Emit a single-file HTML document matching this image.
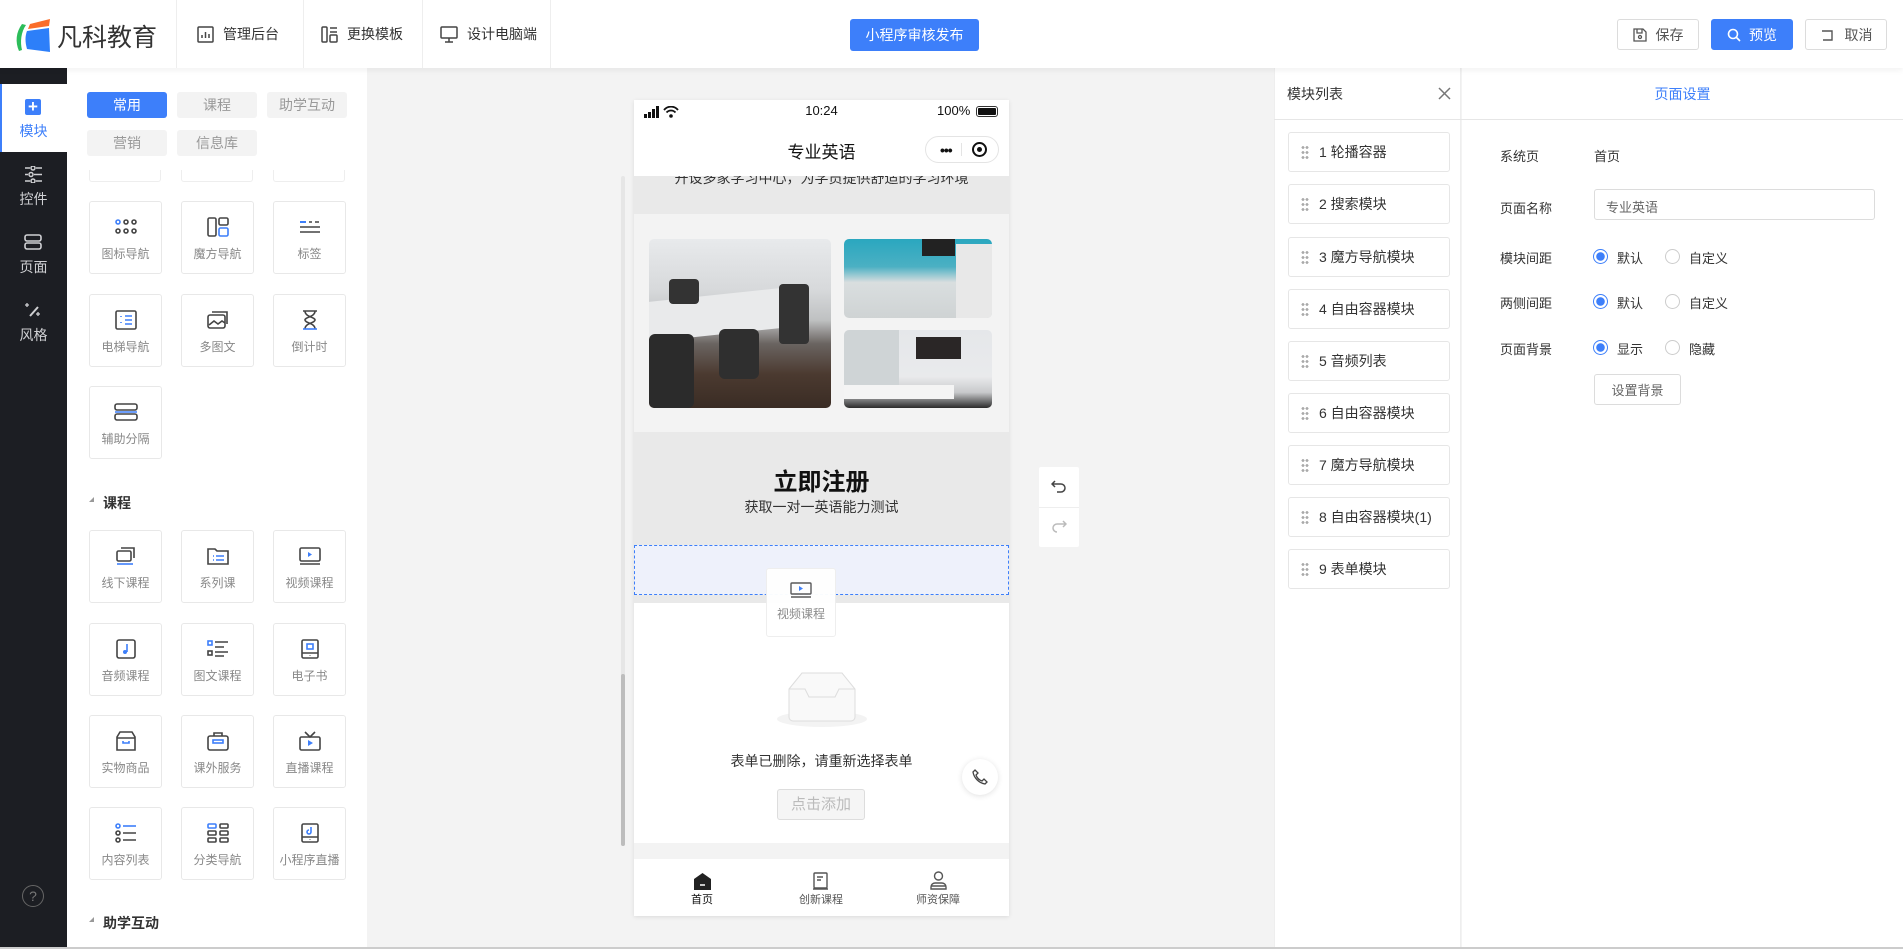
<!DOCTYPE html>
<html><head><meta charset="utf-8">
<style>
*{margin:0;padding:0;box-sizing:border-box}
body{width:1903px;height:949px;overflow:hidden;background:#f3f3f3;font-family:"Liberation Sans","Noto Sans CJK SC",sans-serif;color:#333;position:relative;font-size:14px}
.a{position:absolute}
.hdr{left:0;top:0;width:1903px;height:68px;background:#fff;box-shadow:0 2px 6px rgba(0,0,0,.06);z-index:5}
.sep{top:0;width:1px;height:68px;background:#eee}
.nav{top:0;height:68px;display:flex;align-items:center;font-size:14px;color:#333}
.nav svg{margin-right:9px}
.btn{border:1px solid #dcdcdc;border-radius:3px;background:#fff;display:flex;align-items:center;justify-content:center;font-size:14px;color:#555}
.side{left:0;top:68px;width:67px;height:881px;background:#1c1e23}
.si{left:0;width:67px;text-align:center;color:#cfd0d3;font-size:14px}
.tab{height:26px;border-radius:3px;background:#f3f3f3;color:#999;font-size:14px;display:flex;align-items:center;justify-content:center;width:80px}
.card{width:73px;height:73px;border:1px solid #e8e8e8;border-radius:3px;background:#fff;text-align:center;font-size:12px;color:#888}
.card svg{display:block;margin:15px auto 8px}
.sec{font-size:14px;color:#333;font-weight:bold}
.mi{left:1288px;width:162px;height:40px;border:1px solid #e6e6e6;border-radius:3px;background:#fff;font-size:14px;color:#333;display:flex;align-items:center;padding-left:12px}
.dots{width:8px;height:14px;margin-right:10px;background:radial-gradient(circle,#aaa 1.3px,transparent 1.5px) 0 0/4px 5px}
.lb{left:1500px;font-size:13px;color:#333}
.rd{width:15px;height:15px;border-radius:50%;border:1px solid #ccc;background:#fff}
.rd.on{border-color:#3d7ffa;background:radial-gradient(circle,#3d7ffa 4px,#fff 4.5px)}
.rt{font-size:13px;color:#333}
</style></head><body>

<div class="a hdr">
  <svg class="a" style="left:14px;top:18px" width="40" height="36" viewBox="0 0 40 36">
    <path d="M8 6 C2 14 1 24 5 33 L8 32 C6 24 7 14 12 7Z" fill="#2cbd5a"/>
    <path d="M16 6 L36 1 L35 8 L14 11Z" fill="#fa6d2a"/>
    <path d="M13 13 L35 10 L36 34 L13 31 C11 24 11 18 13 13Z" fill="#2d7ff9"/>
  </svg>
  <div class="a" style="left:57px;top:18px;font-size:25px;color:#333;letter-spacing:0px">凡科教育</div>
  <div class="a sep" style="left:176px"></div>
  <div class="a sep" style="left:303px"></div>
  <div class="a sep" style="left:422px"></div>
  <div class="a sep" style="left:550px"></div>
  <div class="a nav" style="left:197px"><svg width="17" height="17" viewBox="0 0 17 17" fill="none" stroke="#444" stroke-width="1.5"><rect x="1" y="1" width="15" height="15" rx="1"/><path d="M5 12V9M8.5 12V6M12 12V8"/></svg>管理后台</div>
  <div class="a nav" style="left:321px"><svg width="17" height="17" viewBox="0 0 17 17" fill="none" stroke="#444" stroke-width="1.5"><rect x="1" y="1" width="5" height="15" rx="1"/><path d="M9 2h7M9 6h7"/><rect x="9" y="9" width="7" height="7" rx="1"/></svg>更换模板</div>
  <div class="a nav" style="left:440px"><svg width="18" height="17" viewBox="0 0 18 17" fill="none" stroke="#444" stroke-width="1.5"><rect x="1" y="1" width="16" height="11" rx="1"/><path d="M9 12v4M5 16h8"/></svg>设计电脑端</div>
  <div class="a" style="left:850px;top:19px;width:129px;height:32px;background:#3d7ffa;border-radius:3px;color:#fff;font-size:14px;display:flex;align-items:center;justify-content:center">小程序审核发布</div>
  <div class="a btn" style="left:1617px;top:19px;width:82px;height:31px"><svg width="14" height="14" viewBox="0 0 14 14" fill="none" stroke="#555" stroke-width="1.3" style="margin-right:9px"><path d="M1 1h9l3 3v9H1z"/><path d="M4 1v4h5V1"/><circle cx="7" cy="9" r="1.5"/></svg>保存</div>
  <div class="a btn" style="left:1711px;top:19px;width:82px;height:31px;background:#3d7ffa;border-color:#3d7ffa;color:#fff"><svg width="14" height="14" viewBox="0 0 14 14" fill="none" stroke="#fff" stroke-width="1.6" style="margin-right:8px"><circle cx="6" cy="6" r="4.5"/><path d="M9.5 9.5L13 13"/></svg>预览</div>
  <div class="a btn" style="left:1805px;top:19px;width:82px;height:31px"><svg width="14" height="14" viewBox="0 0 14 14" fill="none" stroke="#555" stroke-width="1.4" style="margin-right:11px"><path d="M2 3h10v9H3"/></svg>取消</div>
</div>

<div class="a side"></div>
<div class="a" style="left:0;top:68px;width:67px;height:16px;background:#1c1e23;border-radius:0 0 6px 0"></div>
<div class="a" style="left:0;top:84px;width:67px;height:68px;background:#fff"></div>
<div class="a" style="left:0;top:84px;width:2px;height:68px;background:#3d7ffa"></div>
<div class="a" style="left:25px;top:99px;width:16px;height:16px;background:#3d7ffa;border-radius:2px;color:#fff;font-size:17px;line-height:15px;text-align:center;font-weight:bold">+</div>
<div class="a si" style="top:121px;color:#3d7ffa">模块</div>
<svg class="a" style="left:24px;top:166px" width="19" height="17" viewBox="0 0 19 17" fill="none" stroke="#cfd0d3" stroke-width="1.5"><path d="M1 2h5M12 2h6M1 8.5h3M10 8.5h8M1 15h5M12 15h6"/><circle cx="9" cy="2" r="2"/><circle cx="7" cy="8.5" r="2"/><circle cx="9" cy="15" r="2"/></svg>
<div class="a si" style="top:189px">控件</div>
<svg class="a" style="left:24px;top:234px" width="18" height="16" viewBox="0 0 18 16" fill="none" stroke="#cfd0d3" stroke-width="1.6"><rect x="1" y="1" width="16" height="6" rx="2"/><rect x="1" y="9" width="16" height="6" rx="2"/></svg>
<div class="a si" style="top:257px">页面</div>
<svg class="a" style="left:24px;top:301px" width="18" height="17" viewBox="0 0 18 17" fill="none" stroke="#cfd0d3" stroke-width="2"><path d="M6 15L14 6"/><path d="M3 2v4M1 4h4M14 11v4M12 13h4" stroke-width="1.3"/></svg>
<div class="a si" style="top:325px">风格</div>
<div class="a" style="left:22px;top:885px;width:22px;height:22px;border:1px solid #666;border-radius:50%;color:#777;font-size:14px;text-align:center;line-height:20px">?</div>

<div class="a" style="left:67px;top:68px;width:300px;height:881px;background:#fff"></div>
<div class="a tab" style="left:87px;top:92px;background:#3d7ffa;color:#fff">常用</div>
<div class="a tab" style="left:177px;top:92px">课程</div>
<div class="a tab" style="left:267px;top:92px">助学互动</div>
<div class="a tab" style="left:87px;top:130px">营销</div>
<div class="a tab" style="left:177px;top:130px">信息库</div>
<div class="a" style="left:89px;top:170px;width:72px;height:12px;border:1px solid #eee;border-top:none;border-radius:0 0 3px 3px"></div>
<div class="a" style="left:181px;top:170px;width:72px;height:12px;border:1px solid #eee;border-top:none;border-radius:0 0 3px 3px"></div>
<div class="a" style="left:273px;top:170px;width:72px;height:12px;border:1px solid #eee;border-top:none;border-radius:0 0 3px 3px"></div>

<div class="a card" style="left:89px;top:201px"><svg width="24" height="20" viewBox="0 0 24 20" fill="none" stroke="#444" stroke-width="1.6"><circle cx="4" cy="5" r="2" stroke="#3d7ffa"/><circle cx="12" cy="5" r="2"/><circle cx="20" cy="5" r="2"/><circle cx="4" cy="14" r="2"/><circle cx="12" cy="14" r="2"/><circle cx="20" cy="14" r="2"/></svg>图标导航</div>
<div class="a card" style="left:181px;top:201px"><svg width="24" height="20" viewBox="0 0 24 20" fill="none" stroke="#444" stroke-width="1.6"><rect x="2" y="1" width="8" height="18" rx="1.5"/><rect x="13" y="1" width="9" height="7" rx="1.5"/><rect x="13" y="11" width="9" height="8" rx="1.5" stroke="#3d7ffa"/></svg>魔方导航</div>
<div class="a card" style="left:273px;top:201px"><svg width="24" height="20" viewBox="0 0 24 20" fill="none" stroke="#444" stroke-width="1.6"><path d="M2 5h6" stroke="#3d7ffa" stroke-width="2"/><path d="M11 5h3M17 5h4M2 10h20M2 15h20"/></svg>标签</div>
<div class="a card" style="left:89px;top:294px"><svg width="24" height="20" viewBox="0 0 24 20" fill="none" stroke="#444" stroke-width="1.6"><rect x="2" y="1" width="20" height="18" rx="1.5"/><path d="M7 6v1M7 12v1M11 6h7M11 10h7M11 14h7" stroke="#3d7ffa"/></svg>电梯导航</div>
<div class="a card" style="left:181px;top:294px"><svg width="24" height="20" viewBox="0 0 24 20" fill="none" stroke="#444" stroke-width="1.6"><rect x="2" y="5" width="17" height="13" rx="2"/><path d="M6 2h15v12"/><path d="M3 15l5-4 4 3 4-3 3 2"/></svg>多图文</div>
<div class="a card" style="left:273px;top:294px"><svg width="24" height="20" viewBox="0 0 24 20" fill="none" stroke="#444" stroke-width="1.6"><path d="M5 1h14M7 1c0 6 10 6 10 9s-10 3-10 9M17 1c0 6-10 6-10 9s10 3 10 9"/><path d="M5 19h14" stroke="#3d7ffa"/></svg>倒计时</div>
<div class="a card" style="left:89px;top:386px"><svg width="24" height="20" viewBox="0 0 24 20" fill="none" stroke="#444" stroke-width="1.6"><rect x="1" y="2" width="22" height="6" rx="2"/><rect x="1" y="12" width="22" height="6" rx="2"/><path d="M1 10h22" stroke="#3d7ffa"/></svg>辅助分隔</div>

<div class="a" style="left:89px;top:497px;width:0;height:0;border-left:5px solid transparent;border-bottom:5px solid #999"></div>
<div class="a sec" style="left:103px;top:493px">课程</div>

<div class="a card" style="left:89px;top:530px"><svg width="24" height="20" viewBox="0 0 24 20" fill="none" stroke="#444" stroke-width="1.6"><rect x="3" y="5" width="14" height="10" rx="1.5"/><path d="M7 2h13v10"/><path d="M3 18h16" stroke="#3d7ffa"/></svg>线下课程</div>
<div class="a card" style="left:181px;top:530px"><svg width="24" height="20" viewBox="0 0 24 20" fill="none" stroke="#444" stroke-width="1.6"><path d="M2 3h7l2 2h11v13H2z"/><path d="M7 10h1M10 10h8M7 14h1M10 14h8" stroke="#3d7ffa"/></svg>系列课</div>
<div class="a card" style="left:273px;top:530px"><svg width="24" height="20" viewBox="0 0 24 20" fill="none" stroke="#444" stroke-width="1.6"><rect x="2" y="2" width="20" height="13" rx="1.5"/><path d="M10 6v5l4-2.5z" fill="#3d7ffa" stroke="none"/><path d="M2 18h20"/></svg>视频课程</div>
<div class="a card" style="left:89px;top:623px"><svg width="24" height="20" viewBox="0 0 24 20" fill="none" stroke="#444" stroke-width="1.6"><rect x="3" y="1" width="18" height="18" rx="2"/><path d="M13 5v8" stroke="#3d7ffa"/><circle cx="11" cy="13" r="2" fill="#3d7ffa" stroke="none"/></svg>音频课程</div>
<div class="a card" style="left:181px;top:623px"><svg width="24" height="20" viewBox="0 0 24 20" fill="none" stroke="#444" stroke-width="1.6"><rect x="2" y="2" width="4" height="4" stroke="#3d7ffa"/><rect x="2" y="12" width="4" height="4"/><path d="M9 3h13M9 8h9M9 13h13M9 17h9"/></svg>图文课程</div>
<div class="a card" style="left:273px;top:623px"><svg width="24" height="20" viewBox="0 0 24 20" fill="none" stroke="#444" stroke-width="1.6"><rect x="4" y="1" width="16" height="18" rx="1.5"/><rect x="9" y="5" width="6" height="5" stroke="#3d7ffa"/><path d="M4 14h16M12 16.5v.5"/></svg>电子书</div>
<div class="a card" style="left:89px;top:715px"><svg width="24" height="20" viewBox="0 0 24 20" fill="none" stroke="#444" stroke-width="1.6"><path d="M3 6l3-5h12l3 5v13H3z M3 7h18"/><path d="M9 10v2h6v-2" stroke="#3d7ffa"/></svg>实物商品</div>
<div class="a card" style="left:181px;top:715px"><svg width="24" height="20" viewBox="0 0 24 20" fill="none" stroke="#444" stroke-width="1.6"><rect x="2" y="5" width="20" height="14" rx="2"/><path d="M8 5V2h8v3"/><rect x="7" y="9" width="10" height="3" stroke="#3d7ffa"/></svg>课外服务</div>
<div class="a card" style="left:273px;top:715px"><svg width="24" height="20" viewBox="0 0 24 20" fill="none" stroke="#444" stroke-width="1.6"><rect x="2" y="6" width="20" height="13" rx="1.5"/><path d="M7 1l5 5 5-5"/><path d="M10 9v6l5-3z" fill="#3d7ffa" stroke="none"/></svg>直播课程</div>
<div class="a card" style="left:89px;top:807px"><svg width="24" height="20" viewBox="0 0 24 20" fill="none" stroke="#444" stroke-width="1.6"><circle cx="4" cy="3" r="2" stroke="#3d7ffa"/><circle cx="4" cy="10" r="2"/><circle cx="4" cy="17" r="2"/><path d="M9 3h13" stroke="#3d7ffa"/><path d="M9 10h13M9 17h13"/></svg>内容列表</div>
<div class="a card" style="left:181px;top:807px"><svg width="24" height="20" viewBox="0 0 24 20" fill="none" stroke="#444" stroke-width="1.6"><rect x="2" y="1" width="8" height="4" rx="1" stroke="#3d7ffa"/><rect x="14" y="1" width="8" height="4" rx="1"/><rect x="2" y="8" width="8" height="4" rx="1"/><rect x="14" y="8" width="8" height="4" rx="1"/><rect x="2" y="15" width="8" height="4" rx="1"/><rect x="14" y="15" width="8" height="4" rx="1"/></svg>分类导航</div>
<div class="a card" style="left:273px;top:807px"><svg width="24" height="20" viewBox="0 0 24 20" fill="none" stroke="#444" stroke-width="1.6"><rect x="4" y="1" width="16" height="18" rx="1.5"/><path d="M4 14h16M12 16.5v.5"/><path d="M13 4v5a2 2 0 1 1-2-2" stroke="#3d7ffa"/></svg>小程序直播</div>
<div class="a" style="left:89px;top:917px;width:0;height:0;border-left:5px solid transparent;border-bottom:5px solid #999"></div>
<div class="a sec" style="left:103px;top:913px">助学互动</div>

<div class="a" style="left:621px;top:176px;width:4px;height:670px;background:#e6e6e6;border-radius:2px"></div>
<div class="a" style="left:621px;top:674px;width:4px;height:172px;background:#bdbdbd;border-radius:2px"></div>

<div class="a" style="left:634px;top:100px;width:375px;height:816px;background:#f3f3f3;box-shadow:0 1px 4px rgba(0,0,0,.1);overflow:hidden">
  <div class="a" style="left:0;top:0;width:375px;height:76px;background:#fff"></div>
  <svg class="a" style="left:10px;top:6px" width="38" height="12" viewBox="0 0 38 12"><rect x="0" y="8" width="3" height="4" fill="#111"/><rect x="4" y="6" width="3" height="6" fill="#111"/><rect x="8" y="3" width="3" height="9" fill="#111"/><rect x="12" y="0" width="3" height="12" fill="#111"/><path d="M20 4a9 9 0 0 1 14 0M22.5 6.5a6 6 0 0 1 9 0" fill="none" stroke="#111" stroke-width="1.8"/><circle cx="27" cy="10" r="1.8" fill="#111"/></svg>
  <div class="a" style="left:0;width:375px;top:3px;text-align:center;font-size:13px;color:#111">10:24</div>
  <div class="a" style="left:303px;top:3px;font-size:13px;color:#111">100%</div>
  <div class="a" style="left:342px;top:6px;width:22px;height:11px;border:1px solid #333;border-radius:3px;padding:1px"><div style="width:100%;height:100%;background:#111;border-radius:1px"></div></div>
  <div class="a" style="left:0;width:375px;top:38px;text-align:center;font-size:17px;color:#111">专业英语</div>
  <div class="a" style="left:291px;top:36px;width:74px;height:27px;border:1px solid #e4e4e4;border-radius:14px;background:#fff"></div>
  <div class="a" style="left:306px;top:47px;font-size:14px;letter-spacing:-1px;font-weight:bold;line-height:6px;color:#111">•••</div>
  <div class="a" style="left:327px;top:43px;width:1px;height:13px;background:#e4e4e4"></div>
  <div class="a" style="left:338px;top:42px;width:15px;height:15px;border:2px solid #111;border-radius:50%"><div style="width:5px;height:5px;background:#111;border-radius:50%;margin:3px"></div></div>
  <div class="a" style="left:0;top:76px;width:375px;height:38px;background:#e9e9e9;overflow:hidden"><div style="text-align:center;font-size:14px;color:#333;margin-top:-8px">开设多家学习中心，为学员提供舒适的学习环境</div></div>
  <div class="a" style="left:15px;top:139px;width:182px;height:169px;border-radius:5px;overflow:hidden;background:linear-gradient(180deg,#e8eaec 0%,#d7d9db 30%,#bfc1c2 48%,#6a6461 62%,#4b3a30 80%,#3a2c24 100%)">
    <div style="position:absolute;left:0;top:55px;width:150px;height:40px;background:#e9eaeb;transform:skewY(-6deg)"></div>
    <div style="position:absolute;left:0;top:95px;width:45px;height:74px;background:#2b2b2b;border-radius:6px"></div>
    <div style="position:absolute;left:70px;top:90px;width:40px;height:50px;background:#2f2f2f;border-radius:6px"></div>
    <div style="position:absolute;left:20px;top:40px;width:30px;height:25px;background:#333;border-radius:4px"></div>
    <div style="position:absolute;left:130px;top:45px;width:30px;height:60px;background:#333;border-radius:4px"></div>
  </div>
  <div class="a" style="left:210px;top:139px;width:148px;height:79px;border-radius:5px;overflow:hidden;background:linear-gradient(180deg,#2aa7bf 0%,#4bb0c3 35%,#d9dedf 55%,#cfd3d4 100%)">
    <div style="position:absolute;left:78px;top:0;width:33px;height:17px;background:#222"></div>
    <div style="position:absolute;left:112px;top:5px;width:36px;height:74px;background:#e8e8e8"></div>
  </div>
  <div class="a" style="left:210px;top:230px;width:148px;height:78px;border-radius:5px;overflow:hidden;background:linear-gradient(180deg,#e5e7ea 0%,#e9eaec 60%,#c8c9cb 80%,#2b2b2b 100%)"><div style="position:absolute;left:0;top:0;width:55px;height:60px;background:#cfd4d6"></div><div style="position:absolute;left:72px;top:7px;width:45px;height:22px;background:#2a2626"></div><div style="position:absolute;left:0;top:55px;width:110px;height:14px;background:#f4f4f4"></div></div>
  <div class="a" style="left:0;top:332px;width:375px;height:171px;background:#e9e9e9"></div>
  <div class="a" style="left:0;width:375px;top:362px;text-align:center;font-size:24px;font-weight:bold;color:#111">立即注册</div>
  <div class="a" style="left:0;width:375px;top:397px;text-align:center;font-size:14px;color:#333">获取一对一英语能力测试</div>
  <div class="a" style="left:0;top:445px;width:375px;height:50px;background:#eef1fb;border:1px dashed #3d7ffa"></div>
  <div class="a" style="left:0;top:503px;width:375px;height:240px;background:#fff"></div>
  <svg class="a" style="left:142px;top:571px" width="92" height="57" viewBox="0 0 92 57"><ellipse cx="46" cy="48" rx="45" ry="8" fill="#f3f3f3"/><path d="M13 18L26 2h40l13 16v28a4 4 0 0 1-4 4H17a4 4 0 0 1-4-4z" fill="#f9f9f9" stroke="#ddd"/><path d="M13 18h16l4 8h26l4-8h16" fill="none" stroke="#ddd"/></svg>
  <div class="a" style="left:0;width:375px;top:651px;text-align:center;font-size:14px;color:#333">表单已删除，请重新选择表单</div>
  <div class="a" style="left:143px;top:689px;width:88px;height:31px;border:1px solid #ddd;border-radius:3px;background:#f5f5f5;color:#bbb;font-size:15px;text-align:center;line-height:29px">点击添加</div>
  <div class="a" style="left:328px;top:659px;width:36px;height:36px;border-radius:50%;background:#fff;box-shadow:0 1px 6px rgba(0,0,0,.12)"><svg style="margin:10px" width="16" height="16" viewBox="0 0 16 16" fill="none" stroke="#444" stroke-width="1.3"><path d="M3 1l3 3-2 2c1 3 3 5 6 6l2-2 3 3-2 2C7 14 2 9 1 3z"/></svg></div>
  <div class="a" style="left:0;top:759px;width:375px;height:57px;background:#fff"></div>
  <svg class="a" style="left:59px;top:772px" width="19" height="19" viewBox="0 0 19 19"><path d="M1 7L9.5 1 18 7v11H1z" fill="#222"/><path d="M7 13h5" stroke="#fff" stroke-width="1.5"/></svg>
  <div class="a" style="left:48px;top:791px;width:40px;text-align:center;font-size:11px;color:#111">首页</div>
  <svg class="a" style="left:177px;top:772px" width="19" height="19" viewBox="0 0 19 19" fill="none" stroke="#555" stroke-width="1.4"><rect x="3" y="1" width="13" height="15" rx="1"/><path d="M6 5h6M6 8h4M2 17h15"/></svg>
  <div class="a" style="left:161px;top:791px;width:52px;text-align:center;font-size:11px;color:#555">创新课程</div>
  <svg class="a" style="left:295px;top:771px" width="19" height="19" viewBox="0 0 19 19" fill="none" stroke="#555" stroke-width="1.4"><circle cx="9.5" cy="5" r="4"/><path d="M2 18v-2a4 4 0 0 1 4-4h7a4 4 0 0 1 4 4v2zM2 15h15"/></svg>
  <div class="a" style="left:278px;top:791px;width:52px;text-align:center;font-size:11px;color:#555">师资保障</div>
</div>
<div class="a" style="left:766px;top:568px;width:70px;height:69px;background:#fff;border:1px solid #eee;border-radius:3px;opacity:.97;text-align:center;font-size:12px;color:#888"><svg style="display:block;margin:13px auto 6px" width="22" height="17" viewBox="0 0 22 17" fill="none" stroke="#555" stroke-width="1.4"><rect x="1" y="1" width="20" height="11" rx="1"/><path d="M9 4v5l4-2.5z" fill="#3d7ffa" stroke="none"/><path d="M1 15h20"/></svg>视频课程</div>

<div class="a" style="left:1039px;top:467px;width:40px;height:80px;background:#fff;border-radius:2px"></div>
<div class="a" style="left:1039px;top:507px;width:40px;height:1px;background:#eee"></div>
<svg class="a" style="left:1051px;top:480px" width="16" height="14" viewBox="0 0 16 14" fill="none" stroke="#444" stroke-width="1.5"><path d="M4 1L1 4l3 3M1 4h9a4 4 0 0 1 0 8H6"/></svg>
<svg class="a" style="left:1051px;top:520px" width="16" height="14" viewBox="0 0 16 14" fill="none" stroke="#bbb" stroke-width="1.5"><path d="M12 1l3 3-3 3M15 4H6a4 4 0 0 0 0 8"/></svg>

<div class="a" style="left:1274px;top:68px;width:187px;height:881px;background:#fff;border-left:1px solid #eee;border-right:1px solid #eee"></div>
<div class="a" style="left:1287px;top:84px;font-size:14px;color:#333">模块列表</div>
<svg class="a" style="left:1438px;top:87px" width="13" height="13" viewBox="0 0 13 13" stroke="#777" stroke-width="1.5"><path d="M1 1l11 11M12 1L1 12"/></svg>
<div class="a" style="left:1274px;top:119px;width:629px;height:1px;background:#e6e6e6"></div>
<div class="a mi" style="top:132px"><span class="dots"></span>1 轮播容器</div>
<div class="a mi" style="top:184px"><span class="dots"></span>2 搜索模块</div>
<div class="a mi" style="top:237px"><span class="dots"></span>3 魔方导航模块</div>
<div class="a mi" style="top:289px"><span class="dots"></span>4 自由容器模块</div>
<div class="a mi" style="top:341px"><span class="dots"></span>5 音频列表</div>
<div class="a mi" style="top:393px"><span class="dots"></span>6 自由容器模块</div>
<div class="a mi" style="top:445px"><span class="dots"></span>7 魔方导航模块</div>
<div class="a mi" style="top:497px"><span class="dots"></span>8 自由容器模块(1)</div>
<div class="a mi" style="top:549px"><span class="dots"></span>9 表单模块</div>

<div class="a" style="left:1462px;top:68px;width:441px;height:51px;background:#fff"></div>
<div class="a" style="left:1462px;top:120px;width:441px;height:829px;background:#fff"></div>
<div class="a" style="left:1462px;width:441px;top:84px;text-align:center;font-size:14px;color:#3d7ffa">页面设置</div>
<div class="a lb" style="top:146px">系统页</div>
<div class="a rt" style="left:1594px;top:146px">首页</div>
<div class="a lb" style="top:198px">页面名称</div>
<div class="a" style="left:1594px;top:189px;width:281px;height:31px;border:1px solid #dcdcdc;border-radius:3px;font-size:13px;color:#666;padding:7px 11px">专业英语</div>
<div class="a lb" style="top:248px">模块间距</div>
<div class="a rd on" style="left:1593px;top:249px"></div><div class="a rt" style="left:1617px;top:248px">默认</div>
<div class="a rd" style="left:1665px;top:249px"></div><div class="a rt" style="left:1689px;top:248px">自定义</div>
<div class="a lb" style="top:293px">两侧间距</div>
<div class="a rd on" style="left:1593px;top:294px"></div><div class="a rt" style="left:1617px;top:293px">默认</div>
<div class="a rd" style="left:1665px;top:294px"></div><div class="a rt" style="left:1689px;top:293px">自定义</div>
<div class="a lb" style="top:339px">页面背景</div>
<div class="a rd on" style="left:1593px;top:340px"></div><div class="a rt" style="left:1617px;top:339px">显示</div>
<div class="a rd" style="left:1665px;top:340px"></div><div class="a rt" style="left:1689px;top:339px">隐藏</div>
<div class="a btn" style="left:1594px;top:374px;width:87px;height:31px;font-size:13px;color:#666">设置背景</div>

<div class="a" style="left:0;top:947px;width:1903px;height:2px;background:#ccc"></div>
</body></html>
